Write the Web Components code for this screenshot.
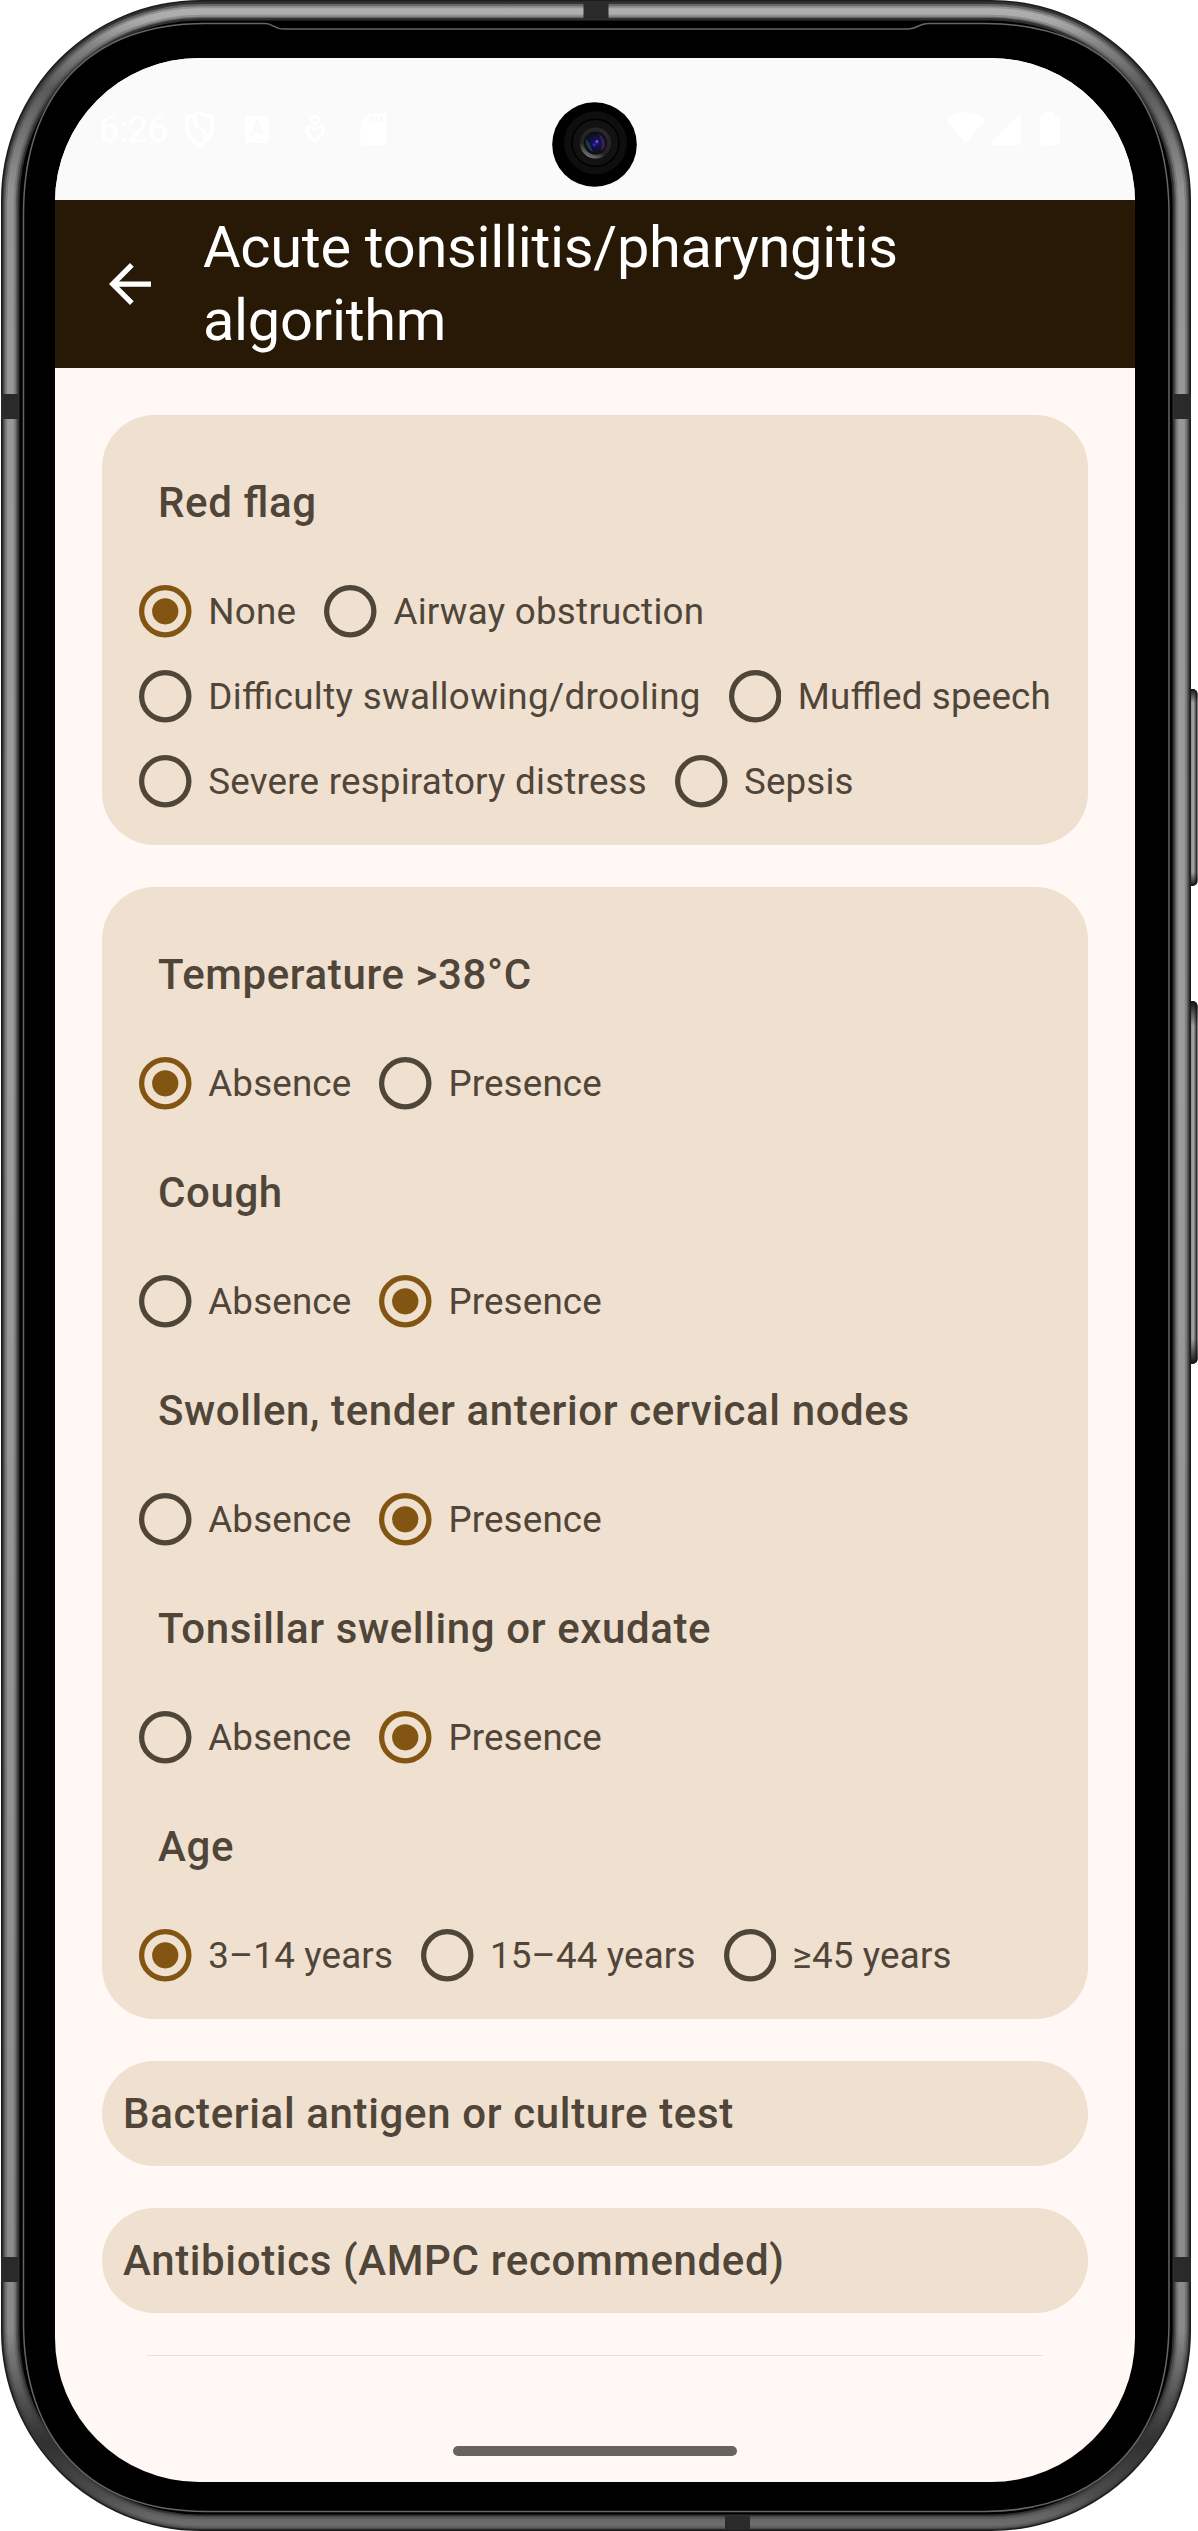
<!DOCTYPE html>
<html lang="en">
<head>
<meta charset="utf-8">
<title>Acute tonsillitis/pharyngitis algorithm</title>
<style>
html,body{margin:0;padding:0;background:#fff}
body{width:1198px;height:2531px;overflow:hidden;font-family:Roboto,"Noto Sans",sans-serif}
</style>
</head>
<body>
<phone-frame>
  <status-bar></status-bar>
  <app-bar>Acute tonsillitis/pharyngitis algorithm</app-bar>
  <card-list>
    <form-card>
      <radio-group label="Red flag" options="None|Airway obstruction|Difficulty swallowing/drooling|Muffled speech|Severe respiratory distress|Sepsis" tracking=".3|.26|.34|.17|.22|.13" selected="0"></radio-group>
    </form-card>
    <form-card>
      <radio-group label="Temperature &gt;38°C" options="Absence|Presence" selected="0"></radio-group>
      <radio-group label="Cough" options="Absence|Presence" selected="1"></radio-group>
      <radio-group label="Swollen, tender anterior cervical nodes" options="Absence|Presence" selected="1"></radio-group>
      <radio-group label="Tonsillar swelling or exudate" options="Absence|Presence" selected="1"></radio-group>
      <radio-group label="Age" options="3–14 years|15–44 years|≥45 years" selected="0"></radio-group>
    </form-card>
    <result-pill>Bacterial antigen or culture test</result-pill>
    <result-pill>Antibiotics (AMPC recommended)</result-pill>
    <empty-result></empty-result>
  </card-list>
</phone-frame>
<script>
const define = (name, html, setup) => customElements.define(name, class extends HTMLElement {
  constructor() {
    super();
    this.attachShadow({ mode: 'open' }).innerHTML = html;
  }
  connectedCallback() { if (setup) setup(this, this.shadowRoot); }
});

define('device-shell', `
<style>:host{display:block;position:absolute;inset:0}svg{display:block}</style>
<svg width="1198" height="2531" viewBox="0 0 1198 2531">
  <defs>
    <linearGradient id="vert" gradientUnits="userSpaceOnUse" x1="0" y1="0" x2="0" y2="2531">
      <stop offset="0" stop-color="#b4b4b4"/><stop offset=".008" stop-color="#aaa"/><stop offset=".018" stop-color="#848484"/>
      <stop offset=".035" stop-color="#5a5a5a"/><stop offset=".075" stop-color="#939393"/>
      <stop offset=".13" stop-color="#969696"/><stop offset=".4" stop-color="#9c9c9c"/>
      <stop offset=".92" stop-color="#8a8a8a"/><stop offset=".965" stop-color="#303030"/>
      <stop offset=".985" stop-color="#4c4c4c"/><stop offset="1" stop-color="#747474"/>
    </linearGradient>
    <linearGradient id="key" x1="0" y1="0" x2="1" y2="0">
      <stop offset="0" stop-color="#555"/><stop offset=".45" stop-color="#777"/><stop offset=".7" stop-color="#aaa"/><stop offset=".85" stop-color="#666"/><stop offset="1" stop-color="#000"/>
    </linearGradient>
    <linearGradient id="keyEnds" x1="0" y1="0" x2="0" y2="1">
      <stop offset="0" stop-color="#111"/><stop offset=".07" stop-color="#111" stop-opacity="0"/>
      <stop offset=".93" stop-color="#111" stop-opacity="0"/><stop offset="1" stop-color="#111"/>
    </linearGradient>
    <clipPath id="body"><rect x="1" y="0" width="1190" height="2531" rx="200"/></clipPath>
  </defs>
  <g>
    <rect x="1183" y="689" width="14.500" height="197" rx="5" fill="url(#key)"/>
    <rect x="1183" y="689" width="14.500" height="197" rx="5" fill="url(#keyEnds)"/>
    <rect x="1183" y="1001" width="14.500" height="363" rx="5" fill="url(#key)"/>
    <rect x="1183" y="1001" width="14.500" height="363" rx="5" fill="url(#keyEnds)"/>
  </g>
  <rect x="1" y="0" width="1190" height="2531" rx="200" fill="#1c1c1c"/>
  <rect x="2.500" y="1.500" width="1187" height="2528" rx="198.500" fill="#343434"/>
  <g fill="none" stroke="url(#vert)">
    <rect x="10.500" y="11" width="1171" height="2511" rx="190" stroke-width="14" stroke-opacity=".4"/>
    <rect x="10.500" y="11.500" width="1171" height="2511" rx="190" stroke-width="10.500" stroke-opacity=".6"/>
    <rect x="10.500" y="11.500" width="1171" height="2511" rx="190" stroke-width="6.500"/>
  </g>
  <g clip-path="url(#body)" fill="#2a2a2a">
    <rect x="583.500" y="1" width="25" height="20"/>
    <rect x="725" y="2512" width="25" height="18"/>
    <rect x="1" y="394" width="18" height="25"/>
    <rect x="1173" y="394" width="18" height="25"/>
    <rect x="1" y="2257" width="18" height="25"/>
    <rect x="1173" y="2257" width="18" height="25"/>
  </g>
  <rect x="18" y="19" width="1156" height="2497" rx="182" fill="#303030"/>
  <rect x="19.500" y="20.500" width="1153" height="2494" rx="181" fill="#000"/>
  <path d="M23.500 215C23.500 92 91 24 205 23.500H265C274 23.500 273 29 284 29H908C918 29 918 23.500 928 23.500H985C1102 24 1169 92 1169 215V2322C1169 2442 1099 2511 985 2511.500H205C91 2511 23.500 2442 23.500 2322Z" fill="#000" stroke="#666" stroke-width="1.500"/>
</svg>`);

define('front-camera', `
<style>:host{display:block;width:85px;height:85px}svg{display:block}</style>
<svg width="85" height="85" viewBox="0 0 85 85">
  <defs>
    <radialGradient id="lens" cx=".52" cy=".5" r=".55"><stop offset="0" stop-color="#2a1c9c"/><stop offset=".3" stop-color="#15104c"/><stop offset=".8" stop-color="#0b1018"/><stop offset="1" stop-color="#07090c"/></radialGradient>
    <linearGradient id="rim" x1=".2" y1="1" x2=".7" y2="0"><stop offset="0" stop-color="#8a8a8a"/><stop offset=".35" stop-color="#222"/><stop offset="1" stop-color="#292929"/></linearGradient>
  </defs>
  <circle cx="42.500" cy="42.500" r="42.300" fill="#000"/>
  <circle cx="43.500" cy="40.800" r="31.500" fill="#0e0e0e"/>
  <circle cx="43.500" cy="40.800" r="23.500" fill="#121212" stroke="#000" stroke-width="1.500"/>
  <circle cx="43.500" cy="41" r="15.500" fill="url(#rim)"/>
  <circle cx="43.500" cy="41" r="11.500" fill="url(#lens)"/>
  <path d="M46 32a11 11 0 0 1 7 9c0 5-2 7-4 8 1-7 1-12-3-17z" fill="#5e2668" opacity=".6"/>
  <path d="M34 37c-1 6 2 11 7 13-2-5-3-9-7-13z" fill="#1d4650" opacity=".8"/>
  <circle cx="45" cy="39.500" r="1.400" fill="#6a4cff"/><circle cx="42" cy="43" r="1.300" fill="#3a2cc0"/>
</svg>`);

define('phone-frame', `
<style>
:host{display:block;position:relative;width:1198px;height:2531px;box-sizing:border-box;padding:58px 63px 49px 55px}
.screen{position:relative;width:1080px;height:2424px;border-radius:144px;overflow:hidden;background:#fff8f4;display:flex;flex-direction:column}
front-camera{position:absolute;left:552px;top:101.500px}
.home{position:absolute;left:453px;top:2446px;width:284px;height:10px;border-radius:5px;background:#686361}
</style>
<device-shell></device-shell>
<div class="screen"><slot></slot></div>
<front-camera></front-camera><div class="home"></div>`);

define('status-bar', `
<style>
:host{display:flex;flex:none;height:142px;box-sizing:border-box;padding:0 74px 0 43.500px;background:#fafafa;align-items:center;color:#fff;font-size:37px}
.time{width:86px;line-height:1;letter-spacing:-.5px}
.left,.right{display:flex;align-items:center}.right{margin-left:auto}
svg{display:block}
</style>
<span class="time">6:26</span>
<div class="left">
  <svg width="29" height="36" viewBox="0 0 29 36" fill="none" stroke="#fff" stroke-width="3.500"><path d="M14.500 2C10 4 7 5.500 2 6v11c0 8 4 13 12.500 17C23 30 27 25 27 17V6c-5-.5-8-2-12.500-4zM10 5c-1 9 1 10 6 13 6 4 6 8 3 13"/></svg>
  <svg style="margin-left:31.500px" width="24" height="27" viewBox="0 0 24 27"><rect width="24" height="27" rx="2" fill="#fff"/><path d="M7 19l5-13 5 13M8.500 15h7" fill="none" stroke="#fafafa" stroke-width="2.500"/><path d="M13 24h2m2 0h2m2 0h2" stroke="#fafafa" stroke-width="1.500"/></svg>
  <svg style="margin-left:36px" width="20" height="28" viewBox="0 0 20 28" fill="none" stroke="#fff" stroke-width="2.800"><circle cx="10" cy="5" r="3.500"/><path d="M10 26C5 22 1.500 19 1.500 15.500c0-4 6-5 8.500-1 2.500-4 8.500-3 8.500 1C18.500 19 15 22 10 26z"/></svg>
  <svg style="margin-left:34.500px" width="27" height="33" viewBox="0 0 27 33"><path d="M9 0h15a2.500 2.500 0 0 1 2.500 2.500v27A2.500 2.500 0 0 1 24 32H3a2.500 2.500 0 0 1-2.500-2.500V9z" fill="#fff"/><path d="M11.500 3.500v6m5-6v6m5-6v6" stroke="#fafafa" stroke-width="2.800"/></svg>
</div>
<div class="right">
  <svg width="115" height="34" viewBox="0 0 115 34" fill="#fff"><path d="M0 8C11-2 28-2 39 8L19.500 32z"/><path d="M43 33L75 1v32z"/><path d="M100 0h8v3h3a3 3 0 0 1 3 3v24a3 3 0 0 1-3 3H97a3 3 0 0 1-3-3V6a3 3 0 0 1 3-3h3z"/></svg>
</div>`);

define('app-bar', `
<style>
:host{display:flex;flex:none;height:168px;box-sizing:border-box;background:#271905;color:#fff;align-items:center;padding-left:53.500px}
svg{display:block;flex:none;margin-right:52.500px}
h1{margin:0;font-weight:400;font-size:57.750px;line-height:73.500px;width:790px;letter-spacing:-.3px}
</style>
<svg width="42" height="42" viewBox="4 4 16 16" fill="#fff"><path d="M20 11H7.830l5.590-5.590L12 4l-8 8 8 8 1.410-1.410L7.830 13H20z"/></svg>
<h1><slot></slot></h1>`);

define('card-list', `
<style>:host{display:flex;flex-direction:column;gap:42px;padding:47px 47px 0 47px}</style><slot></slot>`);

define('form-card', `
<style>:host{display:flex;flex-direction:column;background:#efe0cf;border-radius:52.500px;padding:21px 0}</style><slot></slot>`);

define('radio-group', `
<style>
:host{display:block;color:#4f4539}
h2{margin:0;height:133px;line-height:133px;padding-left:56px;font-size:42px;font-weight:500;letter-spacing:.61px;font-feature-settings:"liga" 1;white-space:nowrap}
.options{display:flex;flex-wrap:wrap;padding-left:37.250px;column-gap:28px}
</style>
<h2></h2><div class="options"></div>`, (el, root) => {
  root.querySelector('h2').textContent = el.getAttribute('label');
  const box = root.querySelector('.options');
  const tracking = (el.getAttribute('tracking') || '').split('|');
  box.replaceChildren();
  el.getAttribute('options').split('|').forEach((text, i) => {
    const o = document.createElement('radio-option');
    o.textContent = text;
    if (tracking[i]) o.style.setProperty('--tracking', tracking[i] + 'px');
    if (i === Number(el.getAttribute('selected'))) o.setAttribute('checked', '');
    box.append(o);
  });
});

define('radio-option', `
<style>
:host{display:flex;align-items:center;height:85px;gap:16.500px;font-size:36.750px;letter-spacing:var(--tracking,.15px);font-feature-settings:"liga" 1;white-space:nowrap}
.ring{flex:none;width:52.500px;height:52.500px;display:block}
.dot{display:none}
:host([checked]) .ring{color:#825513}
:host([checked]) .dot{display:block}
</style>
<svg class="ring" viewBox="0 0 20 20"><circle cx="10" cy="10" r="9" fill="none" stroke="currentColor" stroke-width="2"/><circle class="dot" cx="10" cy="10" r="5" fill="currentColor"/></svg>
<span><slot></slot></span>`);

define('result-pill', `
<style>:host{display:flex;align-items:center;height:105px;box-sizing:border-box;padding-left:21px;border-radius:52.500px;background:#efe0cf;color:#4f4539;font-size:42px;font-weight:500;letter-spacing:.64px;white-space:nowrap}</style><span><slot></slot></span>`);

define('empty-result', `
<style>:host{display:block;height:1px;margin:0 45px;background:#efe0cf}</style>`);
</script>
</body>
</html>
